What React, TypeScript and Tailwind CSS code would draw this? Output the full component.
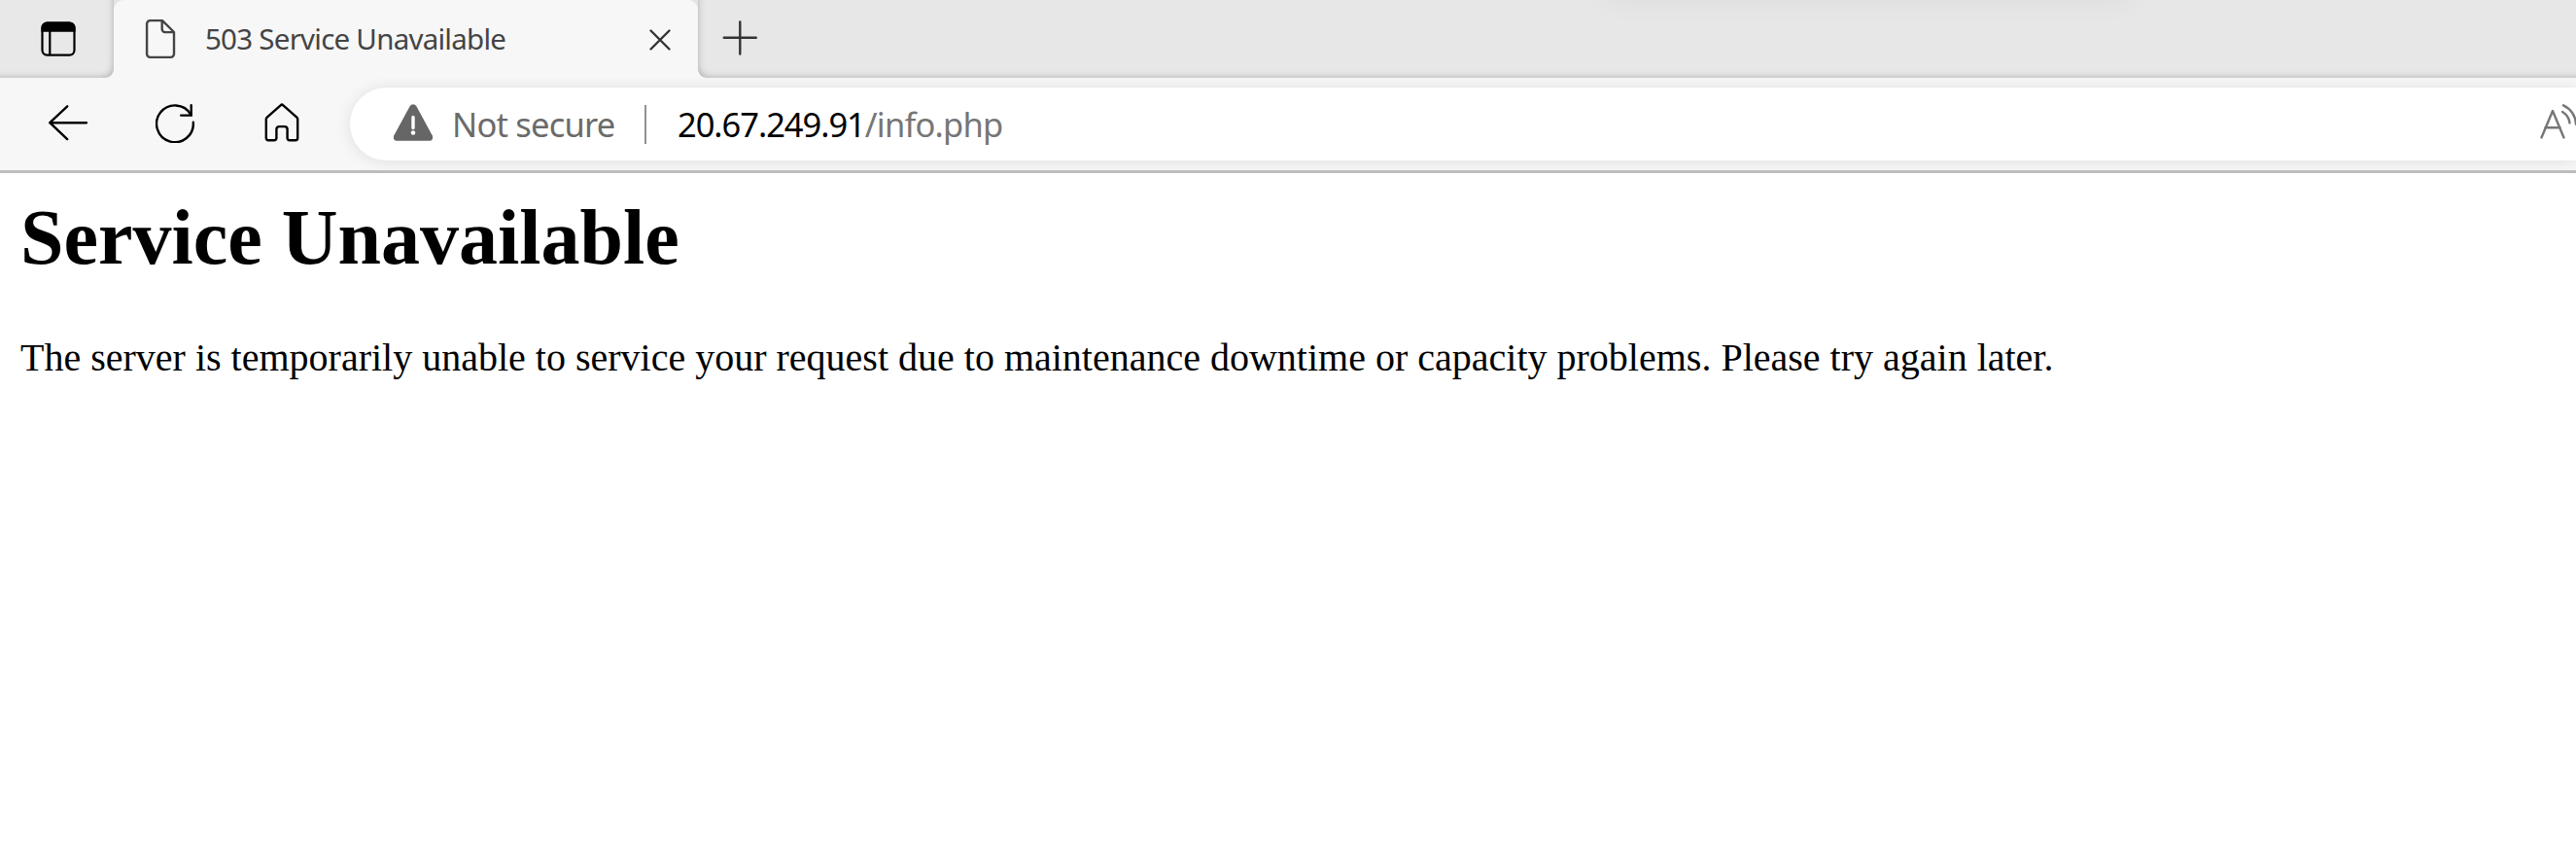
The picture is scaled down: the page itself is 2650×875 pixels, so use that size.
function TabActionsIcon() {
  return (
    <svg className="ml-[40px] mt-[20px] size-[40px]" viewBox="0 0 40 40" fill="none" stroke="#000" strokeWidth="2.2">
      <rect x="3.5" y="3.6" width="33" height="33" rx="5" />
      <path d="M3.5 11.6V8.6a5 5 0 0 1 5-5h23a5 5 0 0 1 5 5v3z" fill="#000" />
      <path d="M11.3 12v24.5" />
    </svg>
  );
}

function PageIcon() {
  return (
    <svg className="ml-[32px] h-[42px] w-[32px] shrink-0" viewBox="0 0 32 42" fill="none" stroke="#444" strokeWidth="2.4" strokeLinejoin="round">
      <path d="M5.5 2.1H18L30 14v22.5a3.4 3.4 0 0 1-3.4 3.4H5.5a3.4 3.4 0 0 1-3.4-3.4v-31a3.4 3.4 0 0 1 3.4-3.4z" />
      <path d="M17.7 2.1v9a3 3 0 0 0 3 3H30" />
    </svg>
  );
}

function TabStrip() {
  return (
    <div className="relative flex h-[80px] shrink-0 overflow-hidden bg-[linear-gradient(#e4e4e4_50%,#f7f7f7_50%)]">
      <div className="w-[117px] shrink-0 rounded-br-[9px] bg-[#e8e8e8] shadow-[inset_-4px_-4px_7px_-4px_rgba(0,0,0,0.25)]">
        <TabActionsIcon />
      </div>
      <div className="flex w-[601px] shrink-0 rounded-t-[10px] bg-[#f7f7f7] pt-[19px]">
        <PageIcon />
        <div className="ml-[30px] mt-[1px] w-[456px] shrink-0 whitespace-nowrap text-[29.5px] leading-[40px] tracking-[-0.75px] text-[#444]">
          503 Service Unavailable
        </div>
        <svg className="mt-[10px] size-[24px] shrink-0" viewBox="0 0 24 24" stroke="#333" strokeWidth="2.4" strokeLinecap="round">
          <path d="M2.5 2.5l19 19M21.5 2.5l-19 19" />
        </svg>
      </div>
      <div className="flex-1 rounded-bl-[9px] bg-[#e7e7e7] shadow-[inset_4px_-4px_7px_-4px_rgba(0,0,0,0.25)]">
        <svg className="ml-[24px] mt-[20px] size-[38px]" viewBox="0 0 38 38" stroke="#333" strokeWidth="2.4" strokeLinecap="round">
          <path d="M19.3 2.5v33M2.8 18.8h33" />
        </svg>
      </div>
      <div className="absolute left-[1652px] top-[-20px] h-[20px] w-[540px] shadow-[0_0_30px_rgba(0,0,0,0.06)]" />
    </div>
  );
}

function Toolbar() {
  return (
    <div className="flex h-[95px] shrink-0 overflow-hidden bg-[#f7f7f7] pl-[50px]">
      <svg className="mt-[26px] size-[40px] shrink-0" viewBox="0 0 40 40" fill="none" stroke="#000" strokeWidth="2.4" strokeLinecap="round" strokeLinejoin="round">
        <path d="M19.2 3.3L1.3 20.2l17.9 16.9M1.3 20.2h37.6" />
      </svg>
      <svg className="ml-[70px] mt-[27px] size-[40px] shrink-0" viewBox="0 0 40 40" fill="none" stroke="#000" strokeWidth="2.4" strokeLinecap="round">
        <path d="M38.8 18.8A18.9 18.9 0 1 1 36.3 10.8" />
        <path d="M36.7 1.2v10.4H26.2" strokeLinejoin="miter" />
      </svg>
      <svg className="ml-[70px] mt-[26px] size-[40px] shrink-0" viewBox="0 0 40 40" fill="none" stroke="#000" strokeWidth="2.4" strokeLinejoin="round">
        <path d="M3.8 16.6c0-.8.3-1.5.9-2L18.6 2.3a2 2 0 0 1 2.8 0l13.9 12.3c.6.5.9 1.2.9 2v19.5a2.2 2.2 0 0 1-2.2 2.2h-6.2a2.2 2.2 0 0 1-2.2-2.2v-9.2a2.8 2.8 0 0 0-2.8-2.8h-5.6a2.8 2.8 0 0 0-2.8 2.8v9.2a2.2 2.2 0 0 1-2.2 2.2H6a2.2 2.2 0 0 1-2.2-2.2z" />
      </svg>
      <div className="ml-[50px] mt-[10px] flex h-[75px] flex-1 rounded-l-full bg-white shadow-[0_1px_16px_rgba(0,0,0,0.1)]">
        <svg className="ml-[45px] mt-[17px] h-[38px] w-[40px] shrink-0" viewBox="0 0 40 38">
          <path d="M16.6 2.3a3.9 3.9 0 0 1 6.8 0l16 29.4a3.7 3.7 0 0 1-3.3 6.1H3.9a3.7 3.7 0 0 1-3.3-6.1z" fill="#666" />
          <path d="M20 13.5v11" stroke="#fff" strokeWidth="3.4" strokeLinecap="round" />
          <circle cx="20" cy="29.5" r="2.3" fill="#fff" />
        </svg>
        <div className="ml-[20px] mt-[15px] w-[198px] shrink-0 whitespace-nowrap text-[34.5px] leading-[46px] tracking-[-0.8px] text-[#6b6b6b]">
          Not secure
        </div>
        <div className="mt-[18px] h-[40px] w-[2px] shrink-0 bg-[#919191]" />
        <div className="ml-[32px] mt-[15px] flex-1 whitespace-nowrap text-[34.5px] leading-[46px] text-[#767676]">
          <span className="tracking-[-1.05px] text-black">20.67.249.91</span>
          <span className="tracking-[-0.8px]">/info.php</span>
        </div>
        <svg className="mt-[15px] h-[44px] w-[40px] shrink-0" viewBox="0 0 40 44" fill="none" stroke="#767676" strokeWidth="2.4" strokeLinecap="round" strokeLinejoin="round">
          <path d="M4.5 36.5L16 9l11.5 27.5M8.3 26.3h15.4" />
          <path d="M26 10a15 15 0 0 1 7.5 11.5M27 3.3a22 22 0 0 1 13 19.5" />
        </svg>
      </div>
    </div>
  );
}

export default function App() {
  return (
    <div className="flex h-[875px] w-[2650px] flex-col overflow-hidden bg-white font-['Noto_Sans','Open_Sans',sans-serif]">
      <TabStrip />
      <Toolbar />
      <div className="h-[3px] shrink-0 bg-[#bdbdbd]" />
      <main className="px-[21px] pt-[20px] font-['Liberation_Serif',serif] text-black">
        <h1 className="text-[80px] font-bold leading-[92px]">Service Unavailable</h1>
        <p className="mt-[55px] text-[40px] leading-[46px]">
          The server is temporarily unable to service your request due to maintenance downtime or capacity problems. Please try again later.
        </p>
      </main>
    </div>
  );
}
